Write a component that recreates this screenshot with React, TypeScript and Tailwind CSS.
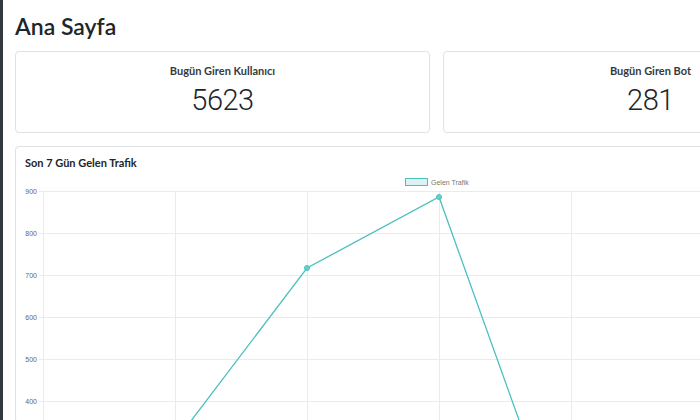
import React from "react";

const ticks = [900, 800, 700, 600, 500, 400, 300, 200, 100, 0];
const cols = [18, 150, 282, 414, 546, 678, 810];
// page coords minus chart origin
const points: [number, number][] = [
  [18, 330],
  [150, 270],
  [282, 96],
  [414, 25],
  [546, 393],
  [678, 300],
  [810, 250],
];

function StatCard({ title, value }: { title: string; value: string }) {
  return (
    <div className="flex h-[82px] flex-col items-center rounded-[4px] border border-[#dfe1e3] bg-white pt-[10px]">
      <h5 className="font-['Lato',sans-serif] text-[11px] font-bold leading-[17px] text-[#343a40]">{title}</h5>
      <div className="mt-[1px] font-['Roboto',sans-serif] text-[29px] font-light leading-[40px] tracking-[-0.5px] text-[#212529]">
        {value}
      </div>
    </div>
  );
}

function TrafficChart() {
  return (
    <svg width="823" height="250" className="block" fontFamily="'Liberation Sans', Arial, sans-serif">
      {/* legend */}
      <rect x="380.5" y="6.5" width="22" height="7" fill="rgba(75,192,192,0.2)" stroke="#4bc0c0" strokeWidth="1" />
      <text x="406" y="12.5" fontSize="7" fill="#777">
        Gelen Trafik
      </text>
      {/* horizontal grid */}
      {ticks.map((t, i) => {
        const y = 19 + i * 42;
        return (
          <g key={t}>
            <line x1="14" x2="823" y1={y + 0.5} y2={y + 0.5} stroke="#ebebeb" strokeWidth="1" />
            {y < 240 && (
              <text x="12" y={y + 2.5} fontSize="7" textAnchor="end" fill="#666">
                {t}
              </text>
            )}
          </g>
        );
      })}
      {/* vertical grid */}
      {cols.map((x) => (
        <line key={x} x1={x + 0.5} x2={x + 0.5} y1="19" y2="300" stroke="#ebebeb" strokeWidth="1" />
      ))}
      <polyline
        points={points.map((p) => p.join(",")).join(" ")}
        fill="none"
        stroke="#4bc0c0"
        strokeWidth="1.3"
      />
      {points.map(([x, y]) => (
        <circle key={x} cx={x} cy={y} r="2.5" fill="#6fcccc" stroke="#4bc0c0" strokeWidth="1" />
      ))}
    </svg>
  );
}

export default function App() {
  return (
    <div className="flex h-[420px] w-[700px] overflow-hidden bg-white font-['Noto_Sans',sans-serif] text-[#212529]">
      <div className="w-[3px] shrink-0 bg-[#343a40]" />
      <main className="w-[855px] shrink-0 pl-[12px]">
        <h1 className="mt-[11px] font-['Lato',sans-serif] text-[23px] font-semibold leading-[30px] text-[#212529]">
          Ana Sayfa
        </h1>
        <div className="mt-[10px] grid w-[843px] grid-cols-2 gap-[13px]">
          <StatCard title="Bugün Giren Kullanıcı" value="5623" />
          <StatCard title="Bugün Giren Bot" value="281" />
        </div>
        <div className="mt-[13px] w-[843px] rounded-[4px] border border-[#dfe1e3] bg-white px-[9px] pt-[8px]">
          <h5 className="font-['Lato',sans-serif] text-[11px] font-bold leading-[16px] text-[#212529]">
            Son 7 Gün Gelen Trafik
          </h5>
          <div className="mt-[1px]">
            <TrafficChart />
          </div>
        </div>
      </main>
    </div>
  );
}
